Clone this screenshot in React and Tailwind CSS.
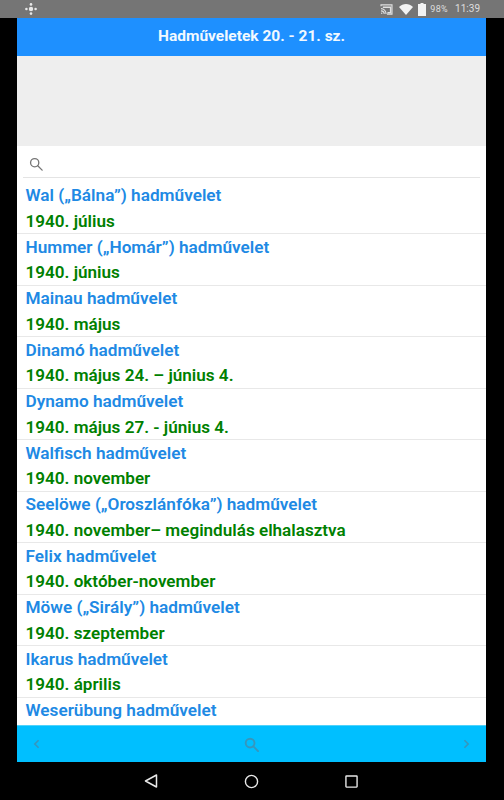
import React from "react";

const rows = [
  ["Wal („Bálna”) hadművelet", "1940. július"],
  ["Hummer („Homár”) hadművelet", "1940. június"],
  ["Mainau hadművelet", "1940. május"],
  ["Dinamó hadművelet", "1940. május 24. – június 4."],
  ["Dynamo hadművelet", "1940. május 27. - június 4."],
  ["Walfisch hadművelet", "1940. november"],
  ["Seelöwe („Oroszlánfóka”) hadművelet", "1940. november– megindulás elhalasztva"],
  ["Felix hadművelet", "1940. október-november"],
  ["Möwe („Sirály”) hadművelet", "1940. szeptember"],
  ["Ikarus hadművelet", "1940. április"],
];

function Search({ className, stroke = "currentColor", sw = 2 }) {
  return (
    <svg viewBox="0 0 16 16" className={className} fill="none" stroke={stroke} strokeWidth={sw}>
      <circle cx="6.5" cy="6.5" r="4.7" />
      <path d="M10 10l5 5" strokeLinecap="round" />
    </svg>
  );
}

export default function App() {
  return (
    <div className="w-[504px] h-[800px] bg-black flex flex-col overflow-hidden font-['Roboto',sans-serif]">
      <div className="h-[18px] bg-[#757575] flex items-center justify-between pl-[25px] pr-[24px] shrink-0">
        <svg viewBox="0 0 12 12" className="w-3 h-3" fill="#e8e8e8">
          <circle cx="6" cy="6" r="2.2" />
          <circle cx="6" cy="1.4" r="1.3" />
          <circle cx="6" cy="10.6" r="1.3" />
          <circle cx="1.4" cy="6" r="1.3" />
          <circle cx="10.6" cy="6" r="1.3" />
        </svg>
        <div className="flex items-center text-[#dedede]">
          <svg viewBox="0 0 14 12" className="w-[13px] h-[11px]" fill="none" stroke="#e0e0e0" strokeWidth="1.2">
            <path d="M1 2.5V1h12v10H7.5" />
            <path d="M1 5c3 0 5.5 2.5 5.5 6M1 7.5c2 0 3.5 1.5 3.5 3.5" />
            <circle cx="1.8" cy="10.2" r=".8" fill="#e0e0e0" stroke="none" />
            <path d="M3 3.5h8.5v6H8" strokeWidth="1.6" />
          </svg>
          <svg viewBox="0 0 14 11" className="w-[14px] h-[11px] ml-[6px]" fill="#f2f2f2">
            <path d="M0 3 C4 -1 10 -1 14 3 L7 11 Z" />
          </svg>
          <svg viewBox="0 0 8 13" className="w-[8px] h-[13px] ml-[5px]" fill="#f2f2f2">
            <path d="M2.5 0h3v1H8v12H0V1h2.5z" />
          </svg>
          <span className="text-[9px] leading-none ml-[4px] tracking-[0.4px]">98%</span>
          <span className="text-[10px] leading-none ml-[7px]">11:39</span>
        </div>
      </div>

      <div className="mx-[17px] w-[469px] flex flex-col flex-1 bg-white min-h-0">
        <div className="h-[38px] shrink-0 bg-[#1e90ff] flex items-center justify-center">
          <span className="text-[#f2f9ff] font-bold text-[15.5px]">Hadműveletek 20. - 21. sz.</span>
        </div>
        <div className="h-[90px] shrink-0 bg-[#eeeeee]" />
        <div className="h-[32px] shrink-0 mx-[6px] border-b border-[#e4e4e4] flex items-center pl-[6px] pt-[4px]">
          <Search className="w-[14px] h-[14px] text-[#757575]" sw={1.5} />
        </div>
        <div className="flex-1 min-h-0 overflow-hidden flex flex-col pt-[4.5px]">
          {rows.map(([a, b]) => (
            <div key={a} className="h-[51.5px] shrink-0 pl-[8.5px] border-b border-[#e8e8e8] flex flex-col">
              <div className="h-[26px] flex items-center text-[#2089e4] font-semibold text-[17.2px] leading-none pt-[1px] whitespace-nowrap">{a}</div>
              <div className="h-[25px] flex items-center text-[#008000] font-semibold text-[17.1px] leading-none pt-[1px] whitespace-nowrap">{b}</div>
            </div>
          ))}
          <div className="pl-[8.5px] h-[26px] flex items-center text-[#2089e4] font-semibold text-[17.2px] leading-none whitespace-nowrap">Weserübung hadművelet</div>
        </div>
        <div className="h-[37px] shrink-0 bg-[#00bfff] border-t border-[#4fd2fb] flex items-center justify-between px-[16px]">
          <svg viewBox="0 0 8 12" className="w-[7px] h-[10px]" fill="none" stroke="#3796bc" strokeWidth="2"><path d="M6.5 1.5L2 6l4.5 4.5" /></svg>
          <Search className="w-[15px] h-[15px]" stroke="#3796bc" sw={2} />
          <svg viewBox="0 0 8 12" className="w-[7px] h-[10px]" fill="none" stroke="#3796bc" strokeWidth="2"><path d="M1.5 1.5L6 6l-4.5 4.5" /></svg>
        </div>
      </div>

      <div className="h-[38px] shrink-0 flex items-center justify-center gap-[86px] pr-[2px]">
        <svg viewBox="0 0 14 14" className="w-[14px] h-[14px]" fill="none" stroke="#e8e8e8" strokeWidth="1.5"><path d="M12.5 1L1.5 7l11 6z" strokeLinejoin="round" /></svg>
        <svg viewBox="0 0 16 16" className="w-[15px] h-[15px]" fill="none" stroke="#e8e8e8" strokeWidth="1.5"><circle cx="8" cy="8" r="6.5" /></svg>
        <svg viewBox="0 0 14 14" className="w-[13px] h-[13px]" fill="none" stroke="#e8e8e8" strokeWidth="1.5"><rect x="1" y="1" width="12" height="12" rx="0.5" /></svg>
      </div>
    </div>
  );
}
